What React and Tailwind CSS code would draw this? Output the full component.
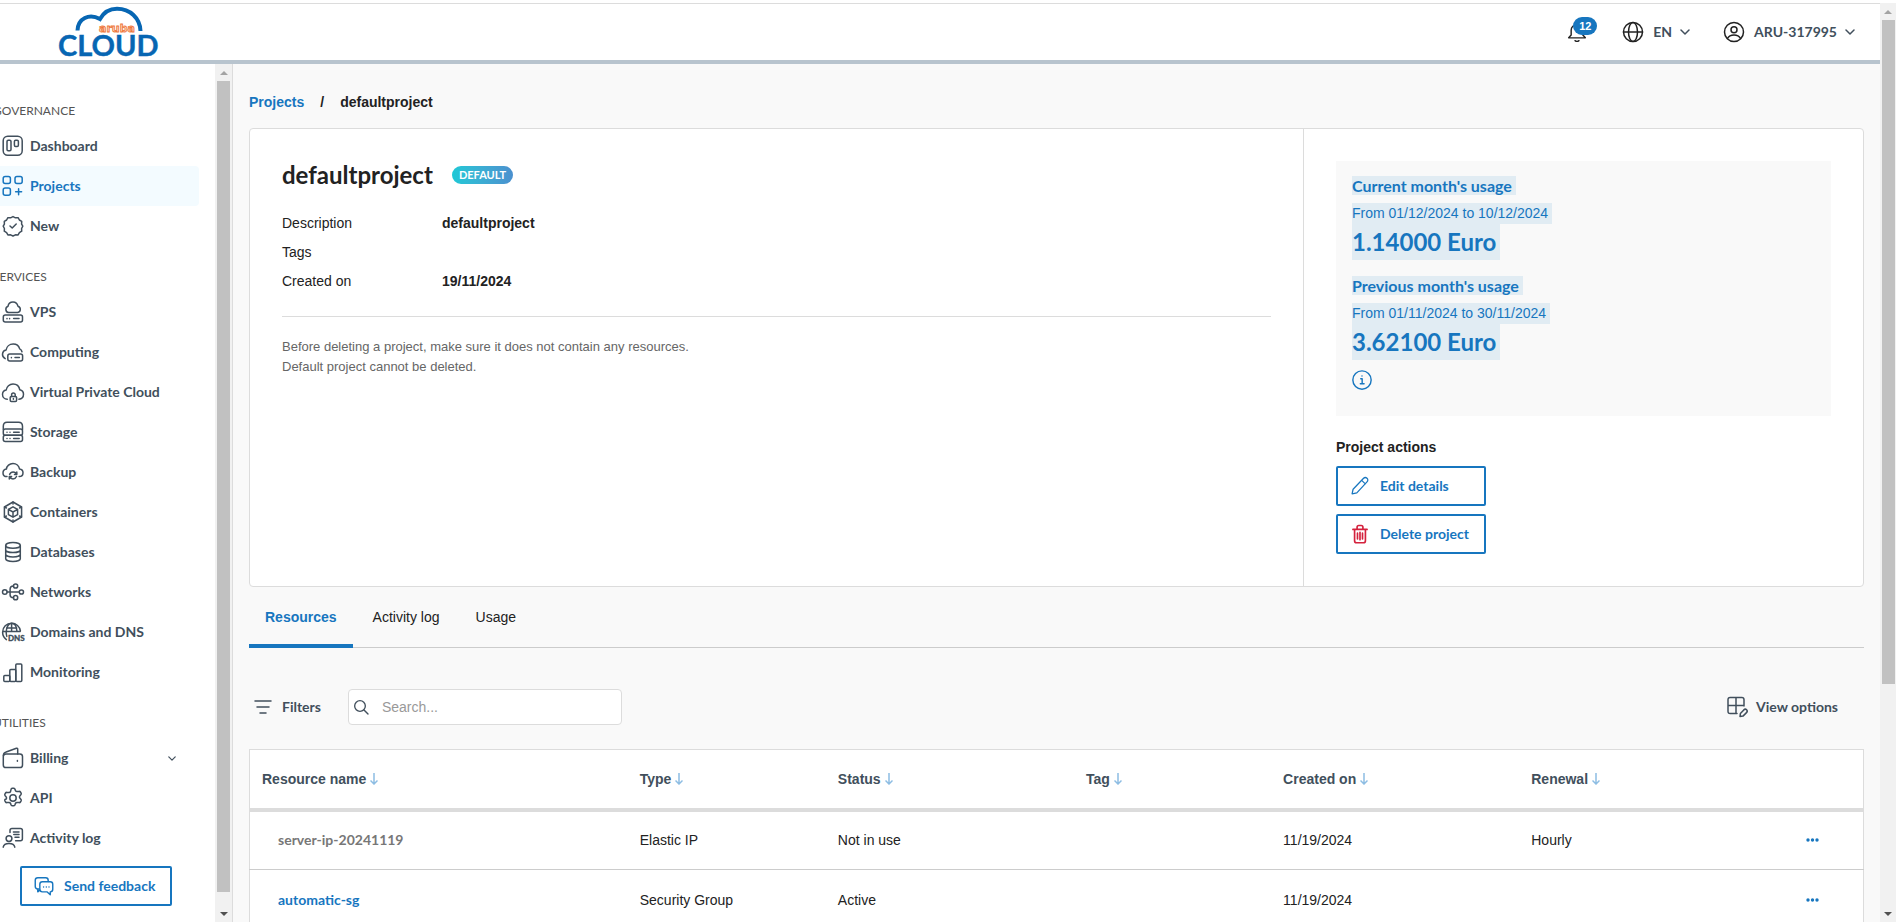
import React from 'react';

function Icon({ children, className = 'size-6', width = 1.5 }) {
  return (
    <svg
      viewBox="0 0 24 24"
      fill="none"
      stroke="currentColor"
      strokeWidth={width}
      strokeLinecap="round"
      strokeLinejoin="round"
      className={`shrink-0 overflow-visible ${className}`}
      aria-hidden="true"
    >
      {children}
    </svg>
  );
}

const icons = {
  dashboard: (
    <>
      <rect x="2.2" y="2.2" width="19" height="19" rx="4.5" />
      <rect x="6" y="6.2" width="4" height="10.6" rx="1.2" />
      <rect x="13.4" y="6.2" width="4" height="6.2" rx="1.2" />
    </>
  ),
  projects: (
    <>
      <rect x="2.2" y="2.4" width="7.2" height="7.2" rx="2" />
      <rect x="14" y="2.4" width="7.2" height="7.2" rx="2" />
      <rect x="2.2" y="14" width="7.2" height="7.2" rx="2" />
      <path d="M17.6 14.8v6M14.6 17.8h6" />
    </>
  ),
  added: (
    <>
      <path d="M12 2.6l2.4 1.2 2.7-.1 1.3 2.3 2.3 1.4-.1 2.7 1.2 2.1-1.2 2.3.1 2.7-2.3 1.4-1.3 2.3-2.7-.1-2.4 1.2-2.4-1.2-2.7.1-1.3-2.3-2.3-1.4.1-2.7-1.2-2.3 1.2-2.1-.1-2.7 2.3-1.4 1.3-2.3 2.7.1z" />
      <path d="M9 12l2.2 2 4-4" />
    </>
  ),
  vps: (
    <>
      <path d="M7.4 12.6a3.3 3.3 0 01-.4-6.3c.4-2.7 2.5-4.3 5-4.3s4.4 1.7 4.9 4.2a3.3 3.3 0 01-.2 6.4z" />
      <rect x="2.3" y="15" width="19.2" height="7" rx="2" />
      <path d="M6 18.5v.2M8.6 18.5v.2M12.6 18.6h5.4" />
    </>
  ),
  computing: (
    <>
      <path d="M4.2 18.6C2.4 17.6 1.3 16 1.5 14c.2-2.2 1.6-3.6 3.6-4C5.6 6.6 8.5 4 12.2 4c3.3 0 5.7 2 6.5 4.9 1.1.5 2.1 1.4 2.3 2.9" />
      <rect x="6.8" y="14" width="14.8" height="7" rx="2" />
      <path d="M10.4 17.5v.2M14 17.6h4.4" />
    </>
  ),
  vpc: (
    <>
      <path d="M6.3 19.2C3.5 19.2 1.5 17 1.5 14.5c0-2.3 1.5-4.1 3.7-4.5C5.6 6.6 8.5 4 12 4c3.6 0 6.2 2.5 6.8 5.8 2.2.5 3.7 2.3 3.7 4.5 0 2.6-1.9 4.7-4.6 4.9" />
      <rect x="9.2" y="16.4" width="6.4" height="5" rx="1.2" />
      <path d="M10.6 16.4v-1.6a1.8 1.8 0 013.6 0v1.6M12.4 18.6v.6" />
    </>
  ),
  storage: (
    <>
      <path d="M2.3 9.6V6.3C2.3 3.8 3.6 2.2 6 2.2h11.6c2.5 0 3.9 1.6 3.9 4.1v3.3" />
      <rect x="2.3" y="9" width="19.2" height="6.3" rx="2" />
      <rect x="2.3" y="15.3" width="19.2" height="6.2" rx="2" />
      <path d="M6 12.2v.1M9 12.2v.1M12.6 12.2h5.6M6 18.4v.1M9 18.4v.1M12.6 18.4h5.6" />
    </>
  ),
  backup: (
    <>
      <path d="M6 16.6c-2.5 0-4-1.7-4-3.7 0-2.1 1.5-3.5 3.4-3.8C5.7 6 8.5 3.4 12 3.4c3.3 0 6 2.4 6.5 5.5 2 .2 3.5 1.7 3.5 3.8 0 2.2-1.6 3.9-3.9 3.9" />
      <path d="M8.6 14.4c.7-1.7 2-2.5 3.5-2.5 1.6 0 2.9.8 3.5 2.3M15.8 12v2.4h-2.3M15.5 16.5c-.7 1.6-2 2.4-3.5 2.4s-2.8-.8-3.5-2.2M8.3 19v-2.4h2.3" />
    </>
  ),
  containers: (
    <>
      <path d="M12 2l8.6 5v10L12 22l-8.6-5V7z" />
      <path d="M12 6.8l4.6 2.6v5.2L12 17.2l-4.6-2.6V9.4zM7.4 9.4L12 12l4.6-2.6M12 12v5.2M12 2v2M3.6 7l1.8 1M20.4 7l-1.8 1M3.6 17l1.8-1M20.4 17l-1.8-1M12 22v-2" />
    </>
  ),
  databases: (
    <>
      <ellipse cx="12" cy="5.4" rx="7.3" ry="2.8" />
      <path d="M4.7 5.4v13.3c0 1.5 3.3 2.7 7.3 2.7s7.3-1.2 7.3-2.7V5.4M4.7 9.9c0 1.5 3.3 2.7 7.3 2.7s7.3-1.2 7.3-2.7M4.7 14.3c0 1.5 3.3 2.7 7.3 2.7s7.3-1.2 7.3-2.7" />
    </>
  ),
  networks: (
    <>
      <circle cx="3.8" cy="12" r="2.3" />
      <circle cx="20.4" cy="12" r="2.1" />
      <circle cx="14.6" cy="6" r="2.1" />
      <circle cx="14.6" cy="17.7" r="2.1" />
      <path d="M6.1 12h12.2M12.5 6c-2.3.1-3.4 1-3.4 3v6c0 1.9 1.2 2.7 3.4 2.7" />
    </>
  ),
  dns: (
    <>
      <path d="M5.4 19.6C3 17.8 1.6 15.3 1.6 12.3 1.6 7 5.6 3.3 10.6 3.3c4.6 0 8.2 3.2 8.8 7.6M1.8 11.4h17.4M6 8h9.6" />
      <path d="M5.8 16.4c-.4-1.3-.6-2.700-.6-4.100 0-5.500 2.500-9 5.400-9s5 3.200 5.300 7.800M10.600 3.300v8" />
      <text x="7" y="21.4" fontSize="8" fontWeight="900" fontFamily="Lato, sans-serif" fill="currentColor" stroke="currentColor" strokeWidth="0.3">
        DNS
      </text>
    </>
  ),
  monitoring: (
    <>
      <rect x="2.8" y="15.4" width="6" height="6" rx="1" />
      <rect x="8.8" y="9.6" width="6" height="11.8" rx="1" />
      <rect x="14.8" y="4" width="6" height="17.4" rx="1" />
    </>
  ),
  billing: (
    <>
      <rect x="2.3" y="8" width="19.2" height="13.5" rx="2.6" />
      <path d="M2.4 9.5c0-2 .8-2.9 2.7-3.5L15.4 2.3c.8-.2 1.3.2 1.3 1V8M16.4 14.6v.6" />
    </>
  ),
  api: (
    <>
      <circle cx="12" cy="12" r="3.2" />
      <path d="M10.2 2.9c.3-.5.7-.7 1.2-.7h1.2c.5 0 .9.2 1.2.7l.7 1.700c.3.700 1 1.100 1.800 1l1.900-.2c.5-.1.9.1 1.200.6l.7 1.200c.2.4.2.9-.1 1.300l-1.200 1.500c-.5.600-.5 1.400 0 2l1.200 1.500c.3.4.3.900.1 1.300l-.7 1.200c-.3.5-.7.7-1.200.6l-1.900-.2c-.8-.1-1.500.3-1.800 1l-.7 1.700c-.3.500-.7.7-1.200.7h-1.200c-.5 0-.9-.2-1.200-.7l-.7-1.700c-.3-.7-1-1.100-1.800-1l-1.900.2c-.5.1-.9-.1-1.200-.6l-.7-1.200c-.2-.4-.2-.9.1-1.300L5.200 13c.5-.6.5-1.400 0-2L4 9.500c-.3-.4-.3-.9-.1-1.300L4.600 7c.3-.5.7-.7 1.200-.6l1.900.2c.8.1 1.500-.3 1.800-1z" />
    </>
  ),
  activity: (
    <>
      <circle cx="8" cy="12.6" r="2.9" />
      <path d="M2.2 21.2c.4-2.4 2.7-3.7 5.8-3.7s5.4 1.3 5.8 3.7M9 6.4V4.5c0-1.3.7-2 2-2h8.4c1.3 0 2 .7 2 2v8.2c0 1.3-.7 2-2 2h-4.8M12.4 6h5.6M12.8 8.6h5.2M14 11.2h4" />
    </>
  ),
};

const menu = [
  {
    title: 'GOVERNANCE',
    items: [
      { label: 'Dashboard', icon: 'dashboard' },
      { label: 'Projects', icon: 'projects', active: true },
      { label: 'New', icon: 'added' },
    ],
  },
  {
    title: 'SERVICES',
    items: [
      { label: 'VPS', icon: 'vps' },
      { label: 'Computing', icon: 'computing' },
      { label: 'Virtual Private Cloud', icon: 'vpc' },
      { label: 'Storage', icon: 'storage' },
      { label: 'Backup', icon: 'backup' },
      { label: 'Containers', icon: 'containers' },
      { label: 'Databases', icon: 'databases' },
      { label: 'Networks', icon: 'networks' },
      { label: 'Domains and DNS', icon: 'dns' },
      { label: 'Monitoring', icon: 'monitoring' },
    ],
  },
  {
    title: 'UTILITIES',
    items: [
      { label: 'Billing', icon: 'billing', expandable: true },
      { label: 'API', icon: 'api' },
      { label: 'Activity log', icon: 'activity' },
    ],
  },
];

const columns = [
  { label: 'Resource name', width: 'w-[378px]' },
  { label: 'Type', width: 'w-[198px]' },
  { label: 'Status', width: 'w-[248px]' },
  { label: 'Tag', width: 'w-[197px]' },
  { label: 'Created on', width: 'w-[248px]' },
  { label: 'Renewal', width: 'w-[198px]' },
];

const resources = [
  { name: 'server-ip-20241119', type: 'Elastic IP', status: 'Not in use', tag: '', created: '11/19/2024', renewal: 'Hourly' },
  { name: 'automatic-sg', type: 'Security Group', status: 'Active', tag: '', created: '11/19/2024', renewal: '', linked: true },
];

const usages = [
  { title: "Current month's usage", range: 'From 01/12/2024 to 10/12/2024', value: '1.14000 Euro' },
  { title: "Previous month's usage", range: 'From 01/11/2024 to 30/11/2024', value: '3.62100 Euro' },
];

const lato = 'font-[Lato,sans-serif]';

function Chevron({ className }) {
  return (
    <svg viewBox="0 0 10 6" fill="none" stroke="currentColor" strokeWidth="1.5" strokeLinecap="round" strokeLinejoin="round" className={`shrink-0 ${className}`} aria-hidden="true">
      <path d="M1 1l4 4 4-4" />
    </svg>
  );
}

function ScrollBar({ width, thumb }) {
  return (
    <div className={`flex shrink-0 flex-col items-center bg-[#f1f1f1] ${width}`} aria-hidden="true">
      <div className="flex h-[17px] items-center">
        <svg viewBox="0 0 8 4" className="h-1 w-2 fill-[#a3a3a3]"><path d="M0 4l4-4 4 4z" /></svg>
      </div>
      <div className="flex w-[13px] flex-1 flex-col">
        <div className={`bg-[#c1c1c1] ${thumb}`}></div>
      </div>
      <div className="flex h-[17px] items-center">
        <svg viewBox="0 0 8 4" className="h-1 w-2 fill-[#505050]"><path d="M0 0l4 4 4-4z" /></svg>
      </div>
    </div>
  );
}

function Logo() {
  return (
    <svg viewBox="0 0 100 52" className="h-[52px] w-[100px] overflow-visible" role="img" aria-label="aruba CLOUD">
      <path d="M18.5 24.5C19 12.5 30 7 41 13C45 6 51 2.8 58 2.8C71 2.8 81 12 81.5 25" fill="none" stroke="#0766b3" strokeWidth="4" />
      <text x="40" y="26" fontSize="11" fontWeight="700" fontFamily="DejaVu Sans, sans-serif" fill="#fbd3bd" stroke="#ee7437" strokeWidth="0.8">
        aruba
      </text>
      <text x="-1" y="50" fontSize="29" fontWeight="700" fontFamily="Lato, sans-serif" fill="#0766b3" stroke="#0766b3" strokeWidth="0.4">
        CLOUD
      </text>
    </svg>
  );
}

function Header() {
  return (
    <header className={`flex h-[61px] items-center justify-between border-t border-b-4 border-t-[#dcdcdc] border-b-[#b8c4ce] bg-white pr-[25px] pl-[59px] ${lato}`}>
      <a href="#home"><Logo /></a>
      <div className="flex items-center text-sm font-bold text-[#414f5c]">
        <button type="button" className="relative mr-6 flex w-[30px]" aria-label="Notifications">
          <Icon className="size-5 text-[#222]" width={1.7}>
            <path d="M2 19h20l-3-3.5V9.6C19 6 16 3.4 12 3.4S5 6 5 9.6v5.9zM9.6 22.4c1.4 1 3.4 1 4.8 0" />
          </Icon>
          <span className="absolute -top-[5px] left-1.5 rounded-full bg-[#1776bf] px-[6px] font-['Liberation_Sans',Arial,sans-serif] text-[11px] leading-[18px] text-white">
            12
          </span>
        </button>
        <button type="button" className="flex items-center gap-2">
          <Icon className="size-6 text-[#222]">
            <circle cx="12" cy="12" r="9.5" />
            <ellipse cx="12" cy="12" rx="4.5" ry="9.5" />
            <path d="M2.5 12h19" />
          </Icon>
          EN
          <Chevron className="h-[6px] w-[10px]" />
        </button>
        <button type="button" className="ml-8 flex items-center gap-2">
          <Icon className="size-6 text-[#222]">
            <circle cx="12" cy="12" r="9.5" />
            <circle cx="12" cy="9.8" r="3" />
            <path d="M5.5 18.4c1.2-2.3 3.6-3.4 6.5-3.4s5.3 1.1 6.5 3.4" />
          </Icon>
          ARU-317995
          <Chevron className="h-[6px] w-[10px]" />
        </button>
      </div>
    </header>
  );
}

function Sidebar() {
  return (
    <aside className={`flex w-[233px] shrink-0 border-r border-[#dcdcdc] bg-white ${lato}`}>
      <div className="min-w-0 flex-1 overflow-hidden pt-4">
        <nav className="mr-4 -ml-[7px]">
          {menu.map((group) => (
            <div key={group.title}>
              <h2 className="pt-[22px] pb-[6px] text-xs leading-[18px] text-[#545454]">{group.title}</h2>
              <ul>
                {group.items.map((item) => (
                  <li key={item.label}>
                    <a
                      href="#menu"
                      className={`flex h-10 items-center gap-[5px] rounded pl-2 text-sm font-bold ${item.active ? 'bg-[#f3fbff] text-[#1776bf]' : 'text-[#414f5c]'}`}
                    >
                      <Icon>{icons[item.icon]}</Icon>
                      <span className="flex-1">{item.label}</span>
                      {item.expandable && <Chevron className="mr-[23px] h-[5px] w-2" />}
                    </a>
                  </li>
                ))}
              </ul>
            </div>
          ))}
        </nav>
        <button type="button" className="mt-2 ml-5 flex h-10 w-[152px] items-center gap-[10px] rounded-xs border-2 border-[#1776bf] px-3 text-sm font-bold whitespace-nowrap text-[#1776bf]">
          <Icon className="size-5" width={1.7}>
            <path d="M6 15.5H4.5c-2 0-3-1-3-3V5c0-2 1-3 3-3H14c2 0 3 1 3 3v1.5M4.5 15.5V19L7 17" />
            <path d="M10 6.8h9.5c2 0 3 1 3 3V16c0 2-1 3-3 3v3.5L15.5 19H10c-2 0-3-1-3-3V9.8c0-2 1-3 3-3zM11.5 13v.2M14.8 13v.2M18 13v.2" />
          </Icon>
          Send feedback
        </button>
      </div>
      <ScrollBar width="w-[17px]" thumb="mb-[13px] flex-1" />
    </aside>
  );
}

function UsagePanel() {
  return (
    <section className={`bg-[#f9f9f9] px-4 pt-[15px] pb-[26px] text-[#1776bf] ${lato}`}>
      {usages.map((usage) => (
        <div key={usage.title} className="mb-4 flex flex-col items-start last-of-type:mb-[10px]">
          <h2 className="bg-[#e1ecf3] pr-1 text-base leading-[19px] font-bold">{usage.title}</h2>
          <p className="mt-2 bg-[#e1ecf3] pr-1 font-['Liberation_Sans',Arial,sans-serif] text-sm leading-[21px]">{usage.range}</p>
          <p className="bg-[#e1ecf3] pr-1 text-2xl leading-9 font-bold">{usage.value}</p>
        </div>
      ))}
      <button type="button" className="block" aria-label="About usage">
        <Icon className="size-5" width={1.7}>
          <circle cx="12" cy="12" r="11" />
          <path d="M10.5 10.5h1.7v6M10 16.5h4.5M12 7v.3" />
        </Icon>
      </button>
    </section>
  );
}

function ProjectCard() {
  return (
    <div className="mt-4 flex rounded border border-[#dcdcdc] bg-white">
      <section className="flex-1 border-r border-[#dcdcdc] p-8">
        <div className="flex items-center gap-[19px]">
          <h1 className={`text-2xl leading-7 font-bold ${lato}`}>defaultproject</h1>
          <span className={`rounded-full bg-linear-to-r from-[#1cc8d6] to-[#4a90cf] px-[7px] text-[11px] leading-[18px] font-bold text-white ${lato}`}>
            DEFAULT
          </span>
        </div>
        <dl className="mt-6 grid grid-cols-[160px_1fr] gap-y-[9px] leading-5">
          <dt>Description</dt>
          <dd className="font-bold">defaultproject</dd>
          <dt>Tags</dt>
          <dd></dd>
          <dt>Created on</dt>
          <dd className="font-bold">19/11/2024</dd>
        </dl>
        <p className="mt-[25px] border-t border-[#dcdcdc] pt-5 text-[13px] leading-5 text-[#666]">
          Before deleting a project, make sure it does not contain any resources.
          <br />
          Default project cannot be deleted.
        </p>
      </section>
      <section className="w-[559px] p-8">
        <UsagePanel />
        <h2 className="mt-[21px] mb-[9px] leading-5 font-bold">Project actions</h2>
        <div className={`flex w-[150px] flex-col gap-2 text-sm font-bold whitespace-nowrap text-[#1776bf] ${lato}`}>
          <button type="button" className="flex h-10 items-center gap-[10px] rounded-xs border-2 border-[#1776bf] px-3">
            <Icon className="size-5">
              <path d="M2.5 21.5l1.2-5.6L16 3c1.4-1.4 3.2-1.4 4.4-.3 1.3 1.2 1.3 3 0 4.4L8.2 20.2zM14 5.2l4.4 4.2" />
            </Icon>
            Edit details
          </button>
          <button type="button" className="flex h-10 items-center gap-[10px] rounded-xs border-2 border-[#1776bf] px-3">
            <Icon className="size-5 text-[#d4213d]" width={2}>
              <path d="M3.5 6.5h17M5.5 6.5V20c0 1.6.8 2.5 2.5 2.5h8c1.700 0 2.5-.9 2.5-2.5V6.5M8.5 6V4c0-1.5.7-2.2 2-2.2h3c1.3 0 2 .7 2 2.2v2M9 11v7M12 10v9M15 11v7" />
            </Icon>
            Delete project
          </button>
        </div>
      </section>
    </div>
  );
}

function ResourceTable() {
  return (
    <table className="mt-6 w-full table-fixed border-collapse border border-[#dcdcdc] bg-white text-left">
      <thead>
        <tr className="h-[60px] border-b-4 border-[#dcdcdc] text-[#414f5c]">
          {columns.map((column) => (
            <th key={column.label} className={`px-3 font-bold ${column.width}`}>
              <button type="button" className="flex items-center gap-1">
                {column.label}
                <svg viewBox="0 0 8 12" fill="none" stroke="#8dbde3" strokeWidth="1.5" className="h-3 w-2" aria-hidden="true">
                  <path d="M4 0v11M0.5 7.5L4 11l3.5-3.5" />
                </svg>
              </button>
            </th>
          ))}
          <th className="w-[146px]" aria-label="Actions"></th>
        </tr>
      </thead>
      <tbody>
        {resources.map((resource) => (
          <tr key={resource.name} className="h-[60px] border-b border-[#ccc]">
            <td className={`px-7 font-bold ${lato}`}>
              {resource.linked ? (
                <a href="#resource" className="text-[#1776bf]">{resource.name}</a>
              ) : (
                <span className="text-[#777]">{resource.name}</span>
              )}
            </td>
            <td className="px-3">{resource.type}</td>
            <td className="px-3">{resource.status}</td>
            <td className="px-3">{resource.tag}</td>
            <td className="px-3">{resource.created}</td>
            <td className="px-3">{resource.renewal}</td>
            <td className="pr-11">
              <button type="button" className="ml-auto block" aria-label="Row actions">
                <svg viewBox="0 0 13 4" className="h-1 w-[13px] fill-[#1776bf]" aria-hidden="true">
                  <circle cx="2" cy="2" r="1.7" />
                  <circle cx="6.5" cy="2" r="1.7" />
                  <circle cx="11" cy="2" r="1.7" />
                </svg>
              </button>
            </td>
          </tr>
        ))}
      </tbody>
    </table>
  );
}

function Toolbar() {
  return (
    <div className={`mt-[41px] flex items-center font-bold text-[#414f5c] ${lato}`}>
      <button type="button" className="flex items-center gap-[10px] pl-[5px]">
        <svg viewBox="0 0 18 14" fill="none" stroke="currentColor" strokeWidth="1.5" strokeLinecap="round" className="h-[14px] w-[18px]" aria-hidden="true">
          <path d="M1 1h16M3 7h12M6 13h6" />
        </svg>
        Filters
      </button>
      <label className="ml-[27px] flex h-9 w-[274px] items-center gap-[13px] rounded border border-[#dcdcdc] bg-white px-1">
        <Icon className="size-4" width={2}>
          <circle cx="10.5" cy="10.5" r="8" />
          <path d="M16.5 16.5l6 6" />
        </Icon>
        <input type="text" placeholder="Search..." aria-label="Search" className="min-w-0 flex-1 font-['Liberation_Sans',Arial,sans-serif] font-normal outline-none placeholder:text-[#999]" />
      </label>
      <button type="button" className="mr-[26px] ml-auto flex items-center gap-[6px]">
        <Icon>
          <path d="M11 18.5H4.2c-1.5 0-2.2-.7-2.2-2.2V4.7c0-1.5.7-2.2 2.2-2.2h11.6c1.5 0 2.2.7 2.2 2.2V11M2 10.5h16M10 2.5v16" />
          <path d="M14 21.5l.4-3 3.4-3.6c.9-.9 2-.9 2.8-.1.8.8.8 1.9-.1 2.8L17 21.1z" />
        </Icon>
        View options
      </button>
    </div>
  );
}

export default function App() {
  return (
    <div className="flex h-screen overflow-hidden bg-white pt-[3px] font-['Liberation_Sans',Arial,sans-serif] text-sm text-[#222]">
      <div className="flex min-w-0 flex-1 flex-col">
        <Header />
        <div className="flex min-h-0 flex-1">
          <Sidebar />
          <main className="min-w-0 flex-1 overflow-hidden bg-[#f9f9f9] px-4 pt-7">
            <nav aria-label="Breadcrumb" className="flex gap-4 leading-5 font-bold">
              <a href="#projects" className="text-[#1776bf]">Projects</a>
              <span>/</span>
              <span>defaultproject</span>
            </nav>
            <ProjectCard />
            <div role="tablist" className="flex h-[61px] items-stretch gap-1 border-b border-[#ccc]">
              <button type="button" role="tab" aria-selected="true" className="-mb-px border-b-4 border-[#1776bf] px-4 pt-[3px] font-bold text-[#1776bf]">Resources</button>
              <button type="button" role="tab" aria-selected="false" className="px-4">Activity log</button>
              <button type="button" role="tab" aria-selected="false" className="px-4">Usage</button>
            </div>
            <Toolbar />
            <ResourceTable />
          </main>
        </div>
      </div>
      <ScrollBar width="w-4" thumb="h-[75%]" />
    </div>
  );
}
